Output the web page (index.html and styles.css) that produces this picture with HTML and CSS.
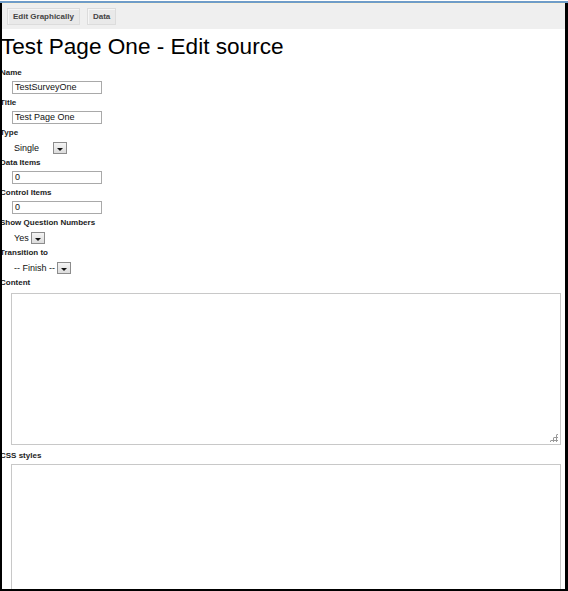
FILE: index.html
```html
<!DOCTYPE html>
<html>
<head>
<meta charset="utf-8">
<link rel="stylesheet" href="styles.css">
</head>
<body>
<div class="toolbar">
  <span class="tbtn">Edit Graphically</span>
  <span class="tbtn">Data</span>
</div>
<h1 class="title">Test Page One - Edit source</h1>
<div class="form">
  <div class="field">
    <div class="lbl">Name</div>
    <div class="input">TestSurveyOne</div>
  </div>
  <div class="field">
    <div class="lbl">Title</div>
    <div class="input">Test Page One</div>
  </div>
  <div class="field">
    <div class="lbl">Type</div>
    <div class="select"><span class="sel-text sel-wide">Single</span><span class="sel-btn"></span></div>
  </div>
  <div class="field">
    <div class="lbl">Data Items</div>
    <div class="input">0</div>
  </div>
  <div class="field">
    <div class="lbl">Control Items</div>
    <div class="input">0</div>
  </div>
  <div class="field">
    <div class="lbl">Show Question Numbers</div>
    <div class="select"><span class="sel-text">Yes</span><span class="sel-btn"></span></div>
  </div>
  <div class="field">
    <div class="lbl">Transition to</div>
    <div class="select"><span class="sel-text">-- Finish --</span><span class="sel-btn"></span></div>
  </div>
  <div class="field">
    <div class="lbl lbl-area">Content</div>
    <div class="textarea content-area"><span class="grip"></span></div>
  </div>
  <div class="field">
    <div class="lbl lbl-css">CSS styles</div>
    <div class="textarea css-area"></div>
  </div>
</div>
</body>
</html>
```
FILE: styles.css
```css
html, body {
  margin: 0;
  padding: 0;
  background: #fff;
  overflow: hidden;
}
body {
  width: 568px;
  height: 591px;
  font-family: "Liberation Sans", Arial, sans-serif;
  color: #000;
  position: relative;
  padding-top: 1px;
  box-sizing: border-box;
}
body::after {
  content: "";
  position: absolute;
  left: 0;
  top: 3px;
  right: 0;
  bottom: 0;
  border-left: 2px solid #000;
  border-right: 3px solid #000;
  border-bottom: 2px solid #000;
  pointer-events: none;
}
.toolbar {
  border-top: 2px solid #6f9cc8;
  box-shadow: inset 0 1px 0 #f7f1de;
  background: #efefef;
  height: 28px;
  box-sizing: border-box;
  padding: 5px 0 0 7px;
  display: flex;
  gap: 7px;
  align-items: flex-start;
}
.tbtn {
  display: block;
  height: 17px;
  box-sizing: border-box;
  line-height: 15px;
  padding: 0 5px;
  font-size: 8px;
  font-weight: bold;
  color: #444;
  background: #e9e9e9;
  border: 1px solid #dcdcdc;
  box-shadow: inset 1px 1px 0 #f6f6f6;
}
.title {
  margin: 6px 0 0 1px;
  font-size: 22.6px;
  line-height: 24px;
  font-weight: normal;
}
.form {
  margin-top: 9px;
}
.field {
  margin-bottom: 4px;
}
.lbl {
  font-size: 8px;
  line-height: 10px;
  font-weight: bold;
  color: #222;
  margin: 0 0 3px 0;
}
.lbl-area {
  margin-bottom: 5px;
}
.lbl-css {
  margin-bottom: 3px;
}
.input {
  margin-left: 12px;
  width: 90px;
  height: 13px;
  box-sizing: border-box;
  border: 1px solid #a9a9a9;
  font-size: 9px;
  line-height: 11px;
  padding-left: 2px;
  color: #111;
}
.select {
  margin-left: 13px;
  height: 13px;
  display: flex;
  align-items: center;
  gap: 2px;
  font-size: 9px;
  color: #111;
}
.sel-text {
  padding-left: 1px;
}
.sel-wide {
  min-width: 37px;
}
.sel-btn {
  position: relative;
  width: 14px;
  height: 12px;
  box-sizing: border-box;
  border: 1px solid #8c8c8c;
  background: linear-gradient(#f4f4f4, #dcdcdc);
}
.sel-btn::after {
  content: "";
  position: absolute;
  left: 3px;
  top: 5px;
  border-left: 3px solid transparent;
  border-right: 3px solid transparent;
  border-top: 3px solid #111;
}
.textarea {
  margin-left: 11px;
  width: 550px;
  box-sizing: border-box;
  border: 1px solid #c8c8c8;
  position: relative;
}
.content-area {
  height: 152px;
  margin-bottom: 6px;
}
.css-area {
  height: 127px;
}
.field:last-child {
  margin-bottom: 0;
}
.grip {
  position: absolute;
  right: 2px;
  bottom: 2px;
  width: 9px;
  height: 9px;
  background:
    radial-gradient(circle, #999 1px, transparent 1.2px) 0 0 / 3px 3px;
  clip-path: polygon(100% 0, 100% 100%, 0 100%);
}
```
